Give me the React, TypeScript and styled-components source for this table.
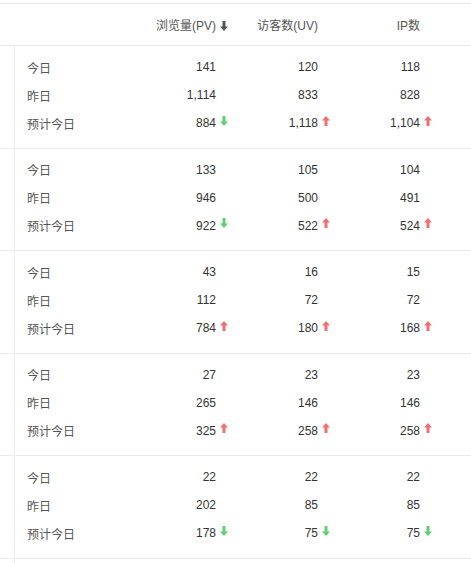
import React from "react";
import styled, { createGlobalStyle } from "styled-components";

const Global = createGlobalStyle`
  html, body { margin: 0; padding: 0; background: #fff; }
  body { font-family: "Liberation Sans", "Noto Sans CJK SC", Arial, sans-serif; font-size: 12px; color: #333; }
`;

const Table = styled.div`
  margin-top: 3px;
  border-top: 1px solid #e9e9e9;
  width: 471px;
`;

const Grid = styled.div`
  display: grid;
  grid-template-columns: 128px 102px 102px 102px 1fr;
`;

const HeaderRow = styled(Grid)`
  height: 41px;
  align-items: center;
  border-bottom: 1px solid #ececec;
  color: #555;
`;

const Group = styled.div`
  display: flex;
  border-bottom: 1px solid #ededed;
`;

const Gutter = styled.div`
  width: 14px;
  flex: none;
  border-right: 1px solid #ededed;
`;

const GroupBody = styled.div<{ $empty?: boolean }>`
  flex: 1;
  padding: 7px 0 10.5px;
  min-height: ${(p) => (p.$empty ? "20px" : "auto")};
`;

const DataRow = styled.div`
  display: grid;
  grid-template-columns: 113px 102px 102px 102px 1fr;
  height: 28px;
  align-items: center;
`;

const Label = styled.div`
  padding-left: 12px;
  color: #555;
`;

const Cell = styled.div`
  display: flex;
  justify-content: flex-end;
  align-items: center;
  padding-right: 2px;
`;

const Value = styled.span`
  color: #333;
`;

const IconSlot = styled.span<{ $raise?: number }>`
  width: 12px;
  display: inline-flex;
  justify-content: flex-end;
  align-items: center;
  height: 12px;
  position: relative;
  top: ${(p) => -(p.$raise ?? 0)}px;
`;

type Trend = "up" | "down" | undefined;

const Arrow: React.FC<{ dir: "up" | "down"; color: string }> = ({ dir, color }) => (
  <svg width="8" height="10" viewBox="0 0 8 10">
    {dir === "up" ? (
      <path d="M4 0 L8 4.6 L5.5 4.6 L5.5 10 L2.5 10 L2.5 4.6 L0 4.6 Z" fill={color} />
    ) : (
      <path d="M4 10 L8 5.4 L5.5 5.4 L5.5 0 L2.5 0 L2.5 5.4 L0 5.4 Z" fill={color} />
    )}
  </svg>
);

const TrendIcon: React.FC<{ t: Trend }> = ({ t }) => (
  <IconSlot $raise={2.5}>
    {t === "up" && <Arrow dir="up" color="#f56c6c" />}
    {t === "down" && <Arrow dir="down" color="#5fcf73" />}
  </IconSlot>
);

const HeadCell = styled(Cell)``;

type V = [string, Trend?];
type GroupData = { today: V[]; yesterday: V[]; forecast: V[] };

const groups: GroupData[] = [
  {
    today: [["141"], ["120"], ["118"]],
    yesterday: [["1,114"], ["833"], ["828"]],
    forecast: [["884", "down"], ["1,118", "up"], ["1,104", "up"]],
  },
  {
    today: [["133"], ["105"], ["104"]],
    yesterday: [["946"], ["500"], ["491"]],
    forecast: [["922", "down"], ["522", "up"], ["524", "up"]],
  },
  {
    today: [["43"], ["16"], ["15"]],
    yesterday: [["112"], ["72"], ["72"]],
    forecast: [["784", "up"], ["180", "up"], ["168", "up"]],
  },
  {
    today: [["27"], ["23"], ["23"]],
    yesterday: [["265"], ["146"], ["146"]],
    forecast: [["325", "up"], ["258", "up"], ["258", "up"]],
  },
  {
    today: [["22"], ["22"], ["22"]],
    yesterday: [["202"], ["85"], ["85"]],
    forecast: [["178", "down"], ["75", "down"], ["75", "down"]],
  },
];

const Row: React.FC<{ label: string; values: V[] }> = ({ label, values }) => (
  <DataRow>
    <Label>{label}</Label>
    {values.map(([v, t], i) => (
      <Cell key={i}>
        <Value>{v}</Value>
        <TrendIcon t={t} />
      </Cell>
    ))}
    <div />
  </DataRow>
);

export default function App() {
  return (
    <>
      <Global />
      <Table>
        <HeaderRow>
          <div />
          <HeadCell>
            <span>浏览量(PV)</span>
            <IconSlot $raise={-1}>
              <Arrow dir="down" color="#555" />
            </IconSlot>
          </HeadCell>
          <HeadCell>
            <span>访客数(UV)</span>
            <IconSlot />
          </HeadCell>
          <HeadCell>
            <span>IP数</span>
            <IconSlot />
          </HeadCell>
          <div />
        </HeaderRow>
        {groups.map((g, i) => (
          <Group key={i}>
            <Gutter />
            <GroupBody>
              <Row label="今日" values={g.today} />
              <Row label="昨日" values={g.yesterday} />
              <Row label="预计今日" values={g.forecast} />
            </GroupBody>
          </Group>
        ))}
        <Group>
          <Gutter />
          <GroupBody $empty />
        </Group>
      </Table>
    </>
  );
}
